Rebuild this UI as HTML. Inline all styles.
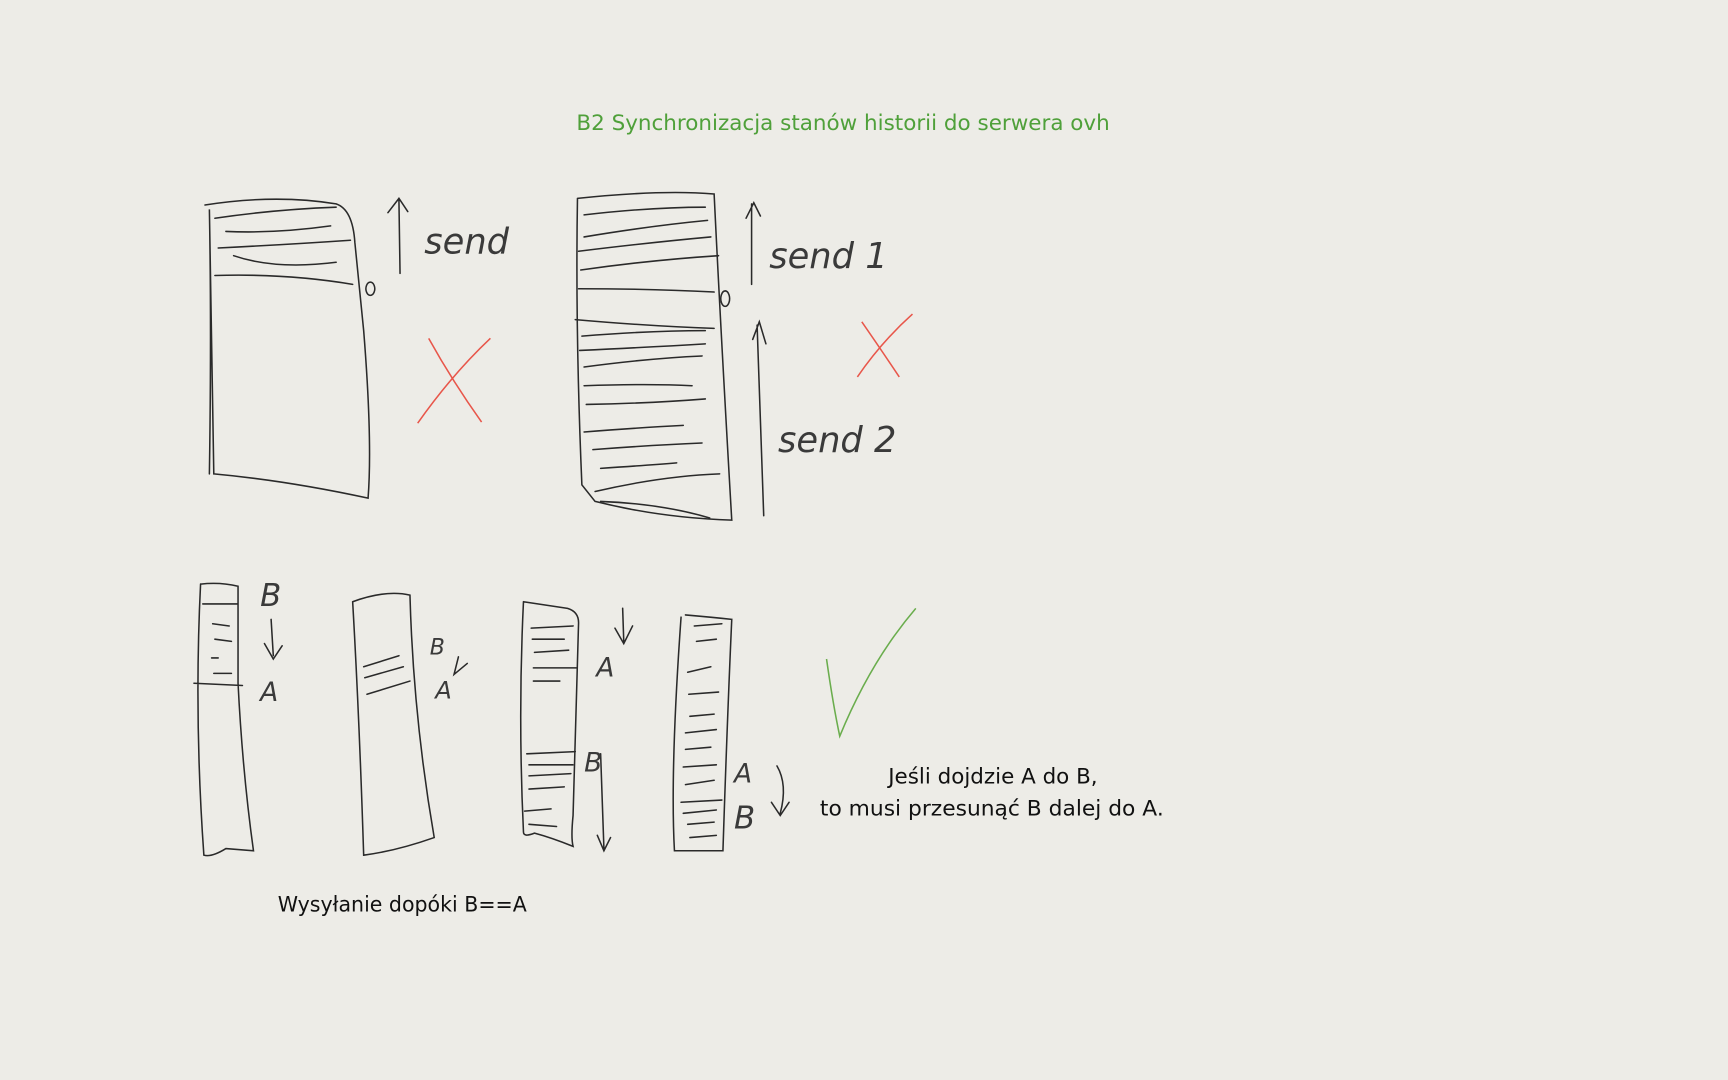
<!DOCTYPE html>
<html><head><meta charset="utf-8"><style>
html,body{margin:0;padding:0;background:#edece7;width:1728px;height:1080px;overflow:hidden}
svg{display:block}
text{font-family:"DejaVu Sans","Liberation Sans",sans-serif}
</style></head><body>
<svg width="1728" height="1080" viewBox="0 0 1568 980" xmlns="http://www.w3.org/2000/svg">
<rect width="1568" height="980" fill="#edece7"/>
<text x="523" y="118" font-size="19" fill="#4fa03a" textLength="484" lengthAdjust="spacingAndGlyphs">B2 Synchronizacja stanów historii do serwera ovh</text>
<g fill="none" stroke="#2a2a2a" stroke-width="1.4" stroke-linecap="round">
<path d="M186 186 Q250 176 305 185 Q320 190 322 220 L330 300 Q338 400 334 452 Q260 436 194 430 L190 190 Q192 300 190 430"/>
<path d="M195 198 Q250 190 305 188 M205 210 Q250 212 300 205 M198 225 Q260 222 318 218 M212 232 Q250 245 305 238 M195 250 Q260 248 320 258"/>
<path d="M363 248 L362 182 M352 193 L362 180 L370 192"/>
<path d="M336 256 a4 6 0 1 0 0.1 0"/>
<path d="M524 180 Q600 172 648 176 Q654 300 664 472 Q600 470 540 455 L528 440 Q522 300 524 180"/>
<path d="M530 195 Q590 188 640 188 M530 215 Q590 205 642 200 M525 228 Q590 220 645 215 M527 245 Q590 236 652 232 M525 262 Q590 262 648 265 M522 290 Q590 296 648 298 M528 305 Q590 300 640 300 M526 318 Q590 315 640 312 M530 333 Q590 325 637 323 M530 350 Q590 348 628 350 M532 367 Q590 366 640 362 M530 392 Q580 388 620 386 M538 408 Q590 404 637 402 M545 425 Q590 422 614 420 M540 446 Q600 432 653 430 M545 455 Q600 457 644 470"/>
<path d="M682 258 L682 185 M677 198 L684 184 L690 196"/>
<path d="M693 468 L687 295 M683 308 L689 292 L695 312"/>
<path d="M658 264 a4 7 0 1 0 0.1 0"/>
<path d="M182 530 Q200 528 216 532 L216 620 Q220 700 230 772 L205 770 Q192 778 185 776 Q176 650 182 530 M176 620 L220 622 M184 548 L216 548"/>
<path d="M193 566 L208 568 M195 580 L210 582 M192 597 L198 597 M194 611 L210 611"/>
<path d="M320 546 Q350 535 372 540 Q375 650 394 760 Q360 772 330 776 Q326 650 320 546"/>
<path d="M330 605 L362 595 M331 615 L366 605 M333 630 L372 618"/>
<path d="M475 546 L515 552 Q525 555 525 565 L520 740 Q518 760 520 768 Q500 760 485 756 Q475 760 475 755 Q470 650 475 546"/>
<path d="M482 570 L520 568 M483 580 L512 580 M485 592 L516 590 M484 606 L523 606 M484 618 L508 618 M478 684 L522 682 M480 694 L520 694 M480 704 L518 702 M480 716 L512 714 M476 736 L500 734 M480 748 L505 750"/>
<path d="M622 558 Q645 560 664 562 Q660 650 656 772 L612 772 Q608 700 618 560"/>
<path d="M630 568 L655 566 M632 582 L650 580 M624 610 L645 605 M625 630 L652 628 M626 650 L648 648 M622 665 L650 662 M622 680 L645 678 M620 696 L650 694 M622 712 L648 708 M618 728 L655 726 M620 738 L650 735 M624 748 L648 746 M626 760 L650 758"/>
<path d="M545 684 L548 770 M542 758 L548 772 L554 760"/>
<path d="M565 552 L566 582 M558 570 L566 584 L574 568"/>
<path d="M246 562 L248 595 M240 584 L248 598 L256 586"/>
<path d="M705 695 Q715 712 708 738 M700 728 L708 740 L716 728"/>
<path d="M416 596 L412 612 L424 602"/>
</g>
<g font-family="Liberation Serif" font-style="italic" fill="#3a3a3a">
<text x="385" y="230" font-size="32">send</text>
<text x="698" y="243" font-size="32">send 1</text>
<text x="706" y="410" font-size="32">send 2</text>
<text x="236" y="550" font-size="28">B</text>
<text x="236" y="636" font-size="24">A</text>
<text x="390" y="594" font-size="20">B</text>
<text x="395" y="634" font-size="22">A</text>
<text x="541" y="614" font-size="24">A</text>
<text x="530" y="700" font-size="24">B</text>
<text x="666" y="710" font-size="24">A</text>
<text x="666" y="752" font-size="28">B</text>
</g>
<g stroke="#e8564a" stroke-width="1.4" fill="none"><path d="M379 384 Q410 340 445 307 M389 307 Q410 345 437 383"/><path d="M778 342 Q800 310 828 285 M782 292 Q800 318 816 342"/></g>
<path d="M750 598 Q756 640 762 668 Q790 600 831 552" stroke="#6aad4d" stroke-width="1.4" fill="none"/>
<text x="806" y="711" font-size="19" fill="#111" textLength="190" lengthAdjust="spacingAndGlyphs">Jeśli dojdzie A do B,</text>
<text x="744" y="740" font-size="19" fill="#111" textLength="312" lengthAdjust="spacingAndGlyphs">to musi przesunąć B  dalej do A.</text>
<text x="252" y="827" font-size="19" fill="#111" textLength="226" lengthAdjust="spacingAndGlyphs">Wysyłanie dopóki B==A</text>
</svg>
</body></html>
